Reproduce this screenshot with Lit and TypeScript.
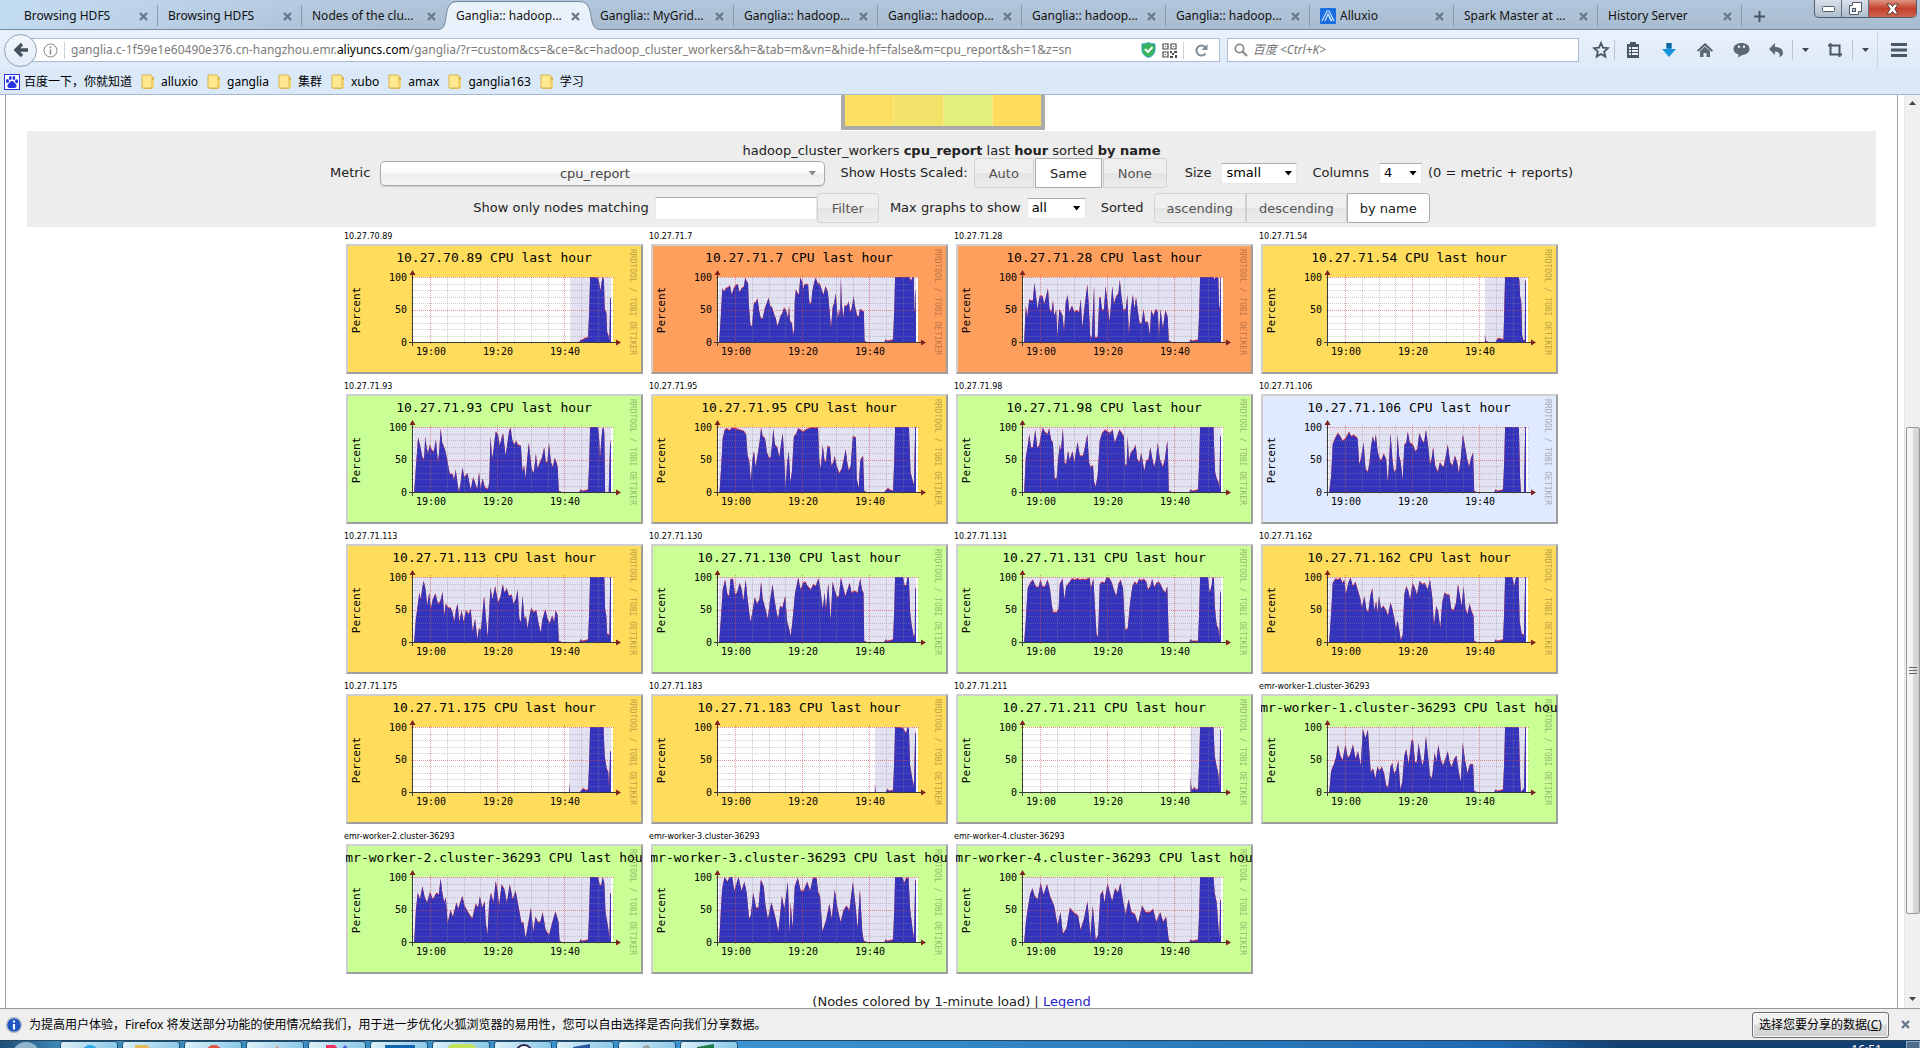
import { LitElement, html, svg, css } from "lit";
import { customElement, property } from "lit/decorators.js";
import { classMap } from "lit/directives/class-map.js";

interface Host {
  name: string;
  tone: "yellow" | "orange" | "green" | "blue";
  first?: number;
  span?: number;
  trace?: string;
  recent: string;
  idleFrom?: number;
}

const PLOT = { x: 67, y: 33, w: 200, h: 65 };
const RECENT_SPAN = 506;

const BUMP = "371:1 376:0 421:0 424:3 428:1 438:2 443:3 446:50 448:100 ";

const HOSTS: Host[] = [
  {
    name: "10.27.70.89", tone: "yellow", idleFrom: 398,
    recent: "420:0 424:2 430:3 434:5 443:6 446:50 448:100 468:98 471:90 474:78 477:90 480:100 483:95 485:50 489:45 491:15 495:8 497:0 499:67 501:67",
  },
  {
    name: "10.27.71.7", tone: "orange", first: 955,
    trace: "958:0 962:38 966:82 970:77 975:82 980:83 985:86 990:72 995:82 1000:87 1005:88 1009:76 1015:82 1020:84 1024:98 1028:92 1031:90 1033:58 1037:25 1041:24 1046:60 1050:60 1055:66 1059:48 1063:36 1068:35 1073:50 1079:60 1083:67 1087:55 1092:52 1097:42 1101:36 1105:24 1109:30 1113:40 1117:42 1122:52 1127:48 1132:36 1135:55 1137:32 1142:28 1145:10 1148:20 1149:62 1152:80 1156:75 1160:72 1163:98 1168:92 1171:80 1173:88 1183:88 1185:68 1187:58 1191:60 1193:75 1197:88 1202:98 1207:90 1213:88 1218:78 1222:72 1227:85 1233:76 1237:48 1241:20 1245:52 1249:60 1253:74 1258:35 1262:50 1264:35 1266:100 1268:60 1272:36 1275:55 1281:55 1286:62 1289:45 1293:50 1298:70 1302:52 1307:40 1311:38 1314:50 1319:48 1324:46 1326:0",
    recent: BUMP + "484:100 488:93 492:100 495:100 497:50 499:45 500:78 501:78",
  },
  {
    name: "10.27.71.28", tone: "orange", first: 184,
    trace: "187:0 191:55 195:38 200:65 204:63 209:63 213:90 217:70 221:50 226:70 233:70 238:58 242:68 247:82 251:50 256:45 260:63 263:40 268:48 271:8 276:50 284:40 288:15 292:60 297:72 301:45 308:55 314:45 320:48 326:45 330:65 334:22 340:55 347:88 350:60 354:8 358:6 361:50 364:85 366:6 373:6 377:68 380:68 384:48 389:50 393:85 398:58 403:30 407:60 410:85 414:58 420:70 425:73 429:95 433:70 438:48 444:50 448:72 452:10 457:50 462:72 466:50 470:68 474:50 479:28 484:28 489:50 493:30 500:30 505:10 508:48 514:40 520:50 525:45 528:8 532:50 538:20 544:48 550:38 553:0",
    recent: BUMP + "482:100 484:95 487:100 494:98 496:55 498:50 500:100 501:100",
  },
  {
    name: "10.27.71.54", tone: "yellow", idleFrom: 397,
    recent: "397:12 399:1 406:0 424:0 428:4 433:5 440:4 444:3 446:50 448:100 482:100 484:95 486:70 489:60 491:10 494:2 498:2 499:94 501:94",
  },
  {
    name: "10.27.71.93", tone: "green", first: 184,
    trace: "187:0 191:35 197:83 203:68 208:52 212:50 215:85 218:70 222:58 226:72 232:63 237:62 242:80 247:45 250:60 254:97 258:75 263:68 267:60 273:40 277:27 284:27 288:18 292:34 296:15 300:0 304:10 309:37 314:22 322:28 330:3 336:22 340:15 347:3 351:30 355:5 360:20 366:6 374:4 377:15 380:85 384:50 388:65 393:92 399:88 403:70 408:82 412:90 418:55 423:75 427:92 431:98 435:80 440:72 445:78 449:72 457:70 461:30 465:40 469:20 473:50 477:75 483:40 487:30 490:30 495:58 499:35 505:45 510:52 516:68 520:45 524:45 528:75 533:45 538:38 543:52 550:38 553:0",
    recent: BUMP + "468:100 471:80 473:48 476:75 479:95 482:100 484:90 486:0 495:0 499:80 501:70",
  },
  {
    name: "10.27.71.95", tone: "yellow", first: 955,
    trace: "959:0 963:38 967:82 972:95 978:97 984:94 990:98 1000:97 1010:95 1020:93 1026:88 1030:55 1034:48 1038:15 1042:50 1046:62 1050:38 1055:55 1060:75 1064:98 1068:85 1074:82 1079:60 1084:52 1088:52 1092:75 1095:97 1099:72 1105:68 1110:52 1115:75 1119:90 1123:45 1126:6 1130:45 1134:62 1138:14 1142:30 1147:85 1152:88 1158:97 1164:95 1170:92 1176:95 1184:97 1192:99 1200:98 1208:98 1211:50 1215:35 1220:72 1224:50 1228:45 1232:70 1238:68 1242:40 1247:45 1250:55 1255:40 1262:28 1268:35 1274:52 1278:65 1282:45 1286:32 1291:40 1296:85 1304:83 1306:20 1311:5 1315:48 1322:55 1325:0",
    recent: "371:1 376:0 421:0 426:3 430:5 434:3 443:1 446:50 448:100 483:100 485:65 487:30 491:20 496:10 499:100 501:100",
  },
  {
    name: "10.27.71.98", tone: "green", first: 184,
    trace: "187:0 191:52 196:70 200:88 204:68 209:68 215:95 220:68 225:70 230:88 234:98 239:92 246:88 250:97 255:80 260:75 264:20 269:20 273:50 277:72 280:62 285:97 289:45 293:42 298:63 302:48 309:62 314:45 322:76 328:55 336:55 341:70 347:88 351:45 355:38 361:40 364:15 368:8 373:25 378:78 384:90 392:95 398:92 404:90 411:95 416:75 422:85 428:95 434:90 439:85 442:42 446:40 449:85 452:48 457:60 464:65 469:72 473:50 479:45 483:60 487:45 491:32 496:48 501:48 506:68 512:48 516:38 520:48 525:75 530:50 538:38 543:50 549:78 551:50 553:0",
    recent: BUMP + "482:100 484:60 486:30 490:20 494:15 497:5 499:85 501:85",
  },
  {
    name: "10.27.71.106", tone: "blue", first: 955,
    trace: "958:0 963:25 967:73 973:82 980:90 986:85 992:78 1000:82 1008:92 1014:85 1020:87 1030:82 1034:42 1038:50 1045:75 1050:35 1056:30 1060:45 1064:70 1068:85 1073:75 1076:88 1081:60 1086:50 1090:48 1096:58 1102:50 1106:14 1109:40 1113:90 1118:50 1122:30 1128:35 1131:88 1135:55 1139:45 1144:18 1148:72 1153:75 1157:92 1162:75 1170:72 1176:62 1181:65 1186:90 1192:80 1198:75 1203:95 1208:72 1213:42 1217:50 1221:68 1226:40 1233:30 1238:45 1243:40 1248:38 1253:55 1258:72 1264:45 1270:40 1276:55 1282:45 1286:28 1291:50 1296:88 1302:68 1307:50 1312:38 1317:52 1322:60 1325:0",
    recent: BUMP + "483:100 486:20 488:0 496:0 499:100 501:100",
  },
  {
    name: "10.27.71.113", tone: "yellow", first: 184,
    trace: "187:0 191:34 196:55 200:75 204:65 208:85 211:93 216:80 220:55 225:75 229:50 234:65 241:74 247:58 253:62 259:76 263:40 267:58 273:52 279:52 284:45 288:30 293:50 297:58 301:30 307:48 312:30 318:48 325:42 330:50 335:15 341:35 347:3 351:20 356:18 360:45 364:70 368:40 373:6 376:40 380:83 385:65 392:85 399:60 405:68 411:88 416:75 421:82 427:70 434:72 438:58 444:65 449:80 453:35 457:30 461:70 466:35 470:38 474:20 479:40 483:52 489:45 496:48 501:30 507:14 512:35 519:50 524:35 530:28 536:40 541:30 545:48 550:40 553:0",
    recent: BUMP + "484:100 486:50 489:40 491:12 497:10 499:100 501:100",
  },
  {
    name: "10.27.71.130", tone: "green", first: 955,
    trace: "958:0 963:42 967:80 973:95 979:72 983:70 987:96 993:96 998:72 1003:75 1010:90 1015:80 1019:62 1025:95 1030:65 1037:30 1042:45 1048:68 1054:58 1060:65 1064:92 1068:65 1073:55 1081:35 1086:60 1093:88 1098:65 1103:45 1107:35 1112:55 1118:52 1125:70 1130:30 1135:20 1139:8 1144:35 1150:75 1158:98 1164:80 1170:90 1176:92 1182:85 1190:80 1196:88 1202:85 1209:97 1214:80 1220:50 1225:75 1228:48 1234:90 1240:32 1245:92 1250:80 1256:68 1261:70 1266:98 1271:85 1277:70 1282:78 1288:90 1293:75 1300:78 1308:75 1315:97 1319:80 1323:75 1325:0",
    recent: BUMP + "468:100 472:86 476:86 480:100 483:98 486:45 490:25 495:8 498:10 499:82 501:82",
  },
  {
    name: "10.27.71.131", tone: "green", first: 184,
    trace: "187:0 191:32 196:82 202:90 209:95 216:85 223:83 228:95 234:84 240:85 246:95 252:82 256:60 260:45 269:45 274:50 277:88 284:97 289:65 293:85 300:90 308:97 316:95 322:97 328:95 336:96 342:95 348:97 352:98 356:82 362:97 366:55 370:12 374:6 378:88 384:92 390:90 396:100 403:97 409:90 415:78 420:70 425:88 431:95 437:82 440:45 443:18 449:20 455:60 461:86 467:92 472:88 478:96 484:94 490:96 496:92 500:80 506:85 511:96 516:84 522:90 527:92 532:88 538:80 544:75 549:85 551:40 553:0",
    recent: "371:0 421:0 424:3 428:1 443:1 446:50 448:100 468:100 472:75 477:85 480:100 483:98 485:55 490:25 494:20 497:5 499:76 501:76",
  },
  {
    name: "10.27.71.162", tone: "yellow", first: 955,
    trace: "958:0 963:45 967:90 974:97 980:95 986:98 992:90 996:95 1000:72 1006:90 1012:98 1018:85 1024:92 1030:80 1036:68 1041:52 1047:70 1052:50 1057:45 1062:70 1067:82 1072:48 1077:62 1080:45 1084:70 1089:50 1095:55 1100:50 1107:40 1113:60 1118:50 1122:38 1127:20 1131:32 1135:20 1139:2 1144:10 1148:72 1153:85 1158:78 1163:65 1169:90 1175:82 1180:72 1187:93 1193:88 1200:90 1207:80 1213:95 1219:68 1223:25 1229:55 1234:45 1239:20 1244:60 1250:75 1256:72 1262:72 1267:50 1273:48 1279:60 1284:88 1290:65 1293:55 1298:85 1303:50 1308:42 1313:58 1319:45 1323:40 1325:0",
    recent: BUMP + "466:100 471:85 476:100 482:100 485:30 490:12 496:10 499:100 501:100",
  },
  {
    name: "10.27.71.175", tone: "yellow", idleFrom: 395,
    recent: "395:14 397:0 422:0 428:3 432:5 436:2 443:3 446:50 448:100 482:100 485:55 490:35 494:30 496:5 499:62 501:62",
  },
  {
    name: "10.27.71.183", tone: "yellow", idleFrom: 397,
    recent: "397:12 399:0 424:0 429:4 433:1 443:2 446:50 448:100 468:98 473:92 476:90 480:100 483:96 486:40 492:18 496:8 499:90 501:90",
  },
  {
    name: "10.27.71.211", tone: "green", idleFrom: 424,
    recent: "424:24 425:12 427:3 431:4 434:7 437:3 443:4 446:50 448:100 482:100 485:55 490:38 494:28 497:5 499:95 501:95",
  },
  {
    name: "emr-worker-1.cluster-36293", tone: "green", first: 955,
    trace: "958:0 963:32 970:42 975:52 980:72 986:55 992:48 999:72 1005:52 1010:55 1018:72 1025:50 1031:62 1038:40 1043:96 1050:82 1056:95 1060:58 1063:30 1069:35 1075:20 1080:38 1085:32 1091:38 1097:28 1102:10 1107:6 1113:38 1118:44 1122:28 1127:32 1133:48 1138:3 1143:15 1148:55 1153:65 1159:42 1166:78 1170:80 1175:45 1180:45 1184:75 1189:55 1194:40 1198:50 1203:85 1208:55 1213:25 1218:20 1225:60 1229:45 1234:72 1240:50 1246:40 1252:50 1258:62 1263:45 1268:38 1274:50 1280:55 1286:30 1291:15 1296:75 1301:50 1308:28 1314:42 1322:42 1325:0",
    recent: BUMP + "483:100 486:20 488:0 496:5 499:99 501:99",
  },
  {
    name: "emr-worker-2.cluster-36293", tone: "green", first: 124, span: 341,
    trace: "126:0 129:48 132:75 136:65 140:85 144:68 148:60 153:76 158:65 164:75 168:72 171:97 174:75 177:60 180:68 183:28 188:48 192:38 198:60 201:50 208:70 212:55 218:45 225:35 231:58 235:52 238:70 242:52 246:62 248:30 251:10 254:60 257:75 261:60 265:93 268:78 271:55 275:88 280:80 284:60 289:88 294:65 299:78 303:58 309:28 312:30 316:5 321:30 325:52 329:15 333:38 337:30 341:30 345:45 350:18 356:10 361:28 367:46 372:30 374:0",
    recent: BUMP + "468:100 472:88 476:86 480:100 484:90 487:45 493:24 497:5 499:74 501:74",
  },
  {
    name: "emr-worker-3.cluster-36293", tone: "green", first: 644, span: 341,
    trace: "646:0 649:48 651:80 655:100 660:92 664:100 668:100 672:78 679:100 684:78 689:92 693:75 697:35 700:40 704:75 709:52 713:52 717:95 722:85 725:55 729:35 735:60 741:40 747:15 753:70 757:50 763:92 766:10 768:60 771:20 775:85 780:98 785:78 790:78 796:92 801:78 806:98 812:98 815:75 818:70 822:15 828:32 834:58 838:35 843:80 848:50 853:30 858:48 863:55 868:48 874:92 878:60 882:20 886:80 890:15 893:0",
    recent: BUMP + "466:100 471:90 476:98 482:98 486:50 492:20 496:5 499:94 501:94",
  },
  {
    name: "emr-worker-4.cluster-36293", tone: "green", first: 1164, span: 341,
    trace: "1166:0 1169:30 1172:50 1176:72 1180:82 1184:70 1189:65 1194:90 1199:72 1205:88 1210:70 1217:55 1223:25 1228:45 1232:12 1238:20 1244:52 1250:45 1258:40 1262:18 1268:35 1274:62 1279:8 1283:55 1288:2 1292:10 1296:72 1300:78 1303:60 1308:90 1312:75 1316:62 1321:82 1326:75 1330:90 1335:60 1339:42 1344:65 1349:45 1355:42 1360:28 1367:55 1373:45 1380:45 1386:50 1391:30 1398:45 1403:30 1408:38 1412:5 1414:0",
    recent: BUMP + "482:100 485:75 490:60 494:25 497:5 499:64 501:64",
  },
];

function samples(host: Host): [number, number][] {
  const read = (text: string, first: number, span: number) =>
    text.trim().split(/\s+/).map((pair): [number, number] => {
      const [at, value] = pair.split(":").map(Number);
      return [PLOT.x + ((at - first) * PLOT.w) / span, value];
    });
  return [
    ...(host.trace ? read(host.trace, host.first ?? 0, host.span ?? RECENT_SPAN) : []),
    ...read(host.recent, 0, RECENT_SPAN),
  ];
}

function area(points: [number, number][], extra: number): string {
  const base = PLOT.y + PLOT.h;
  const line = points.map(([x, v]) => {
    const value = v > 0 ? Math.min(100, v + extra) : 0;
    return `L${x.toFixed(1)} ${(base - (value * PLOT.h) / 100).toFixed(1)}`;
  });
  return `M${points[0][0].toFixed(1)} ${base}${line.join("")}V${base}Z`;
}

@customElement("cpu-graph")
class CpuGraph extends LitElement {
  @property({ attribute: false }) host!: Host;

  static styles = css`
    :host { display: block; }
    .graph {
      display: block; width: 297px; height: 130px; overflow: hidden;
      font-family: "DejaVu Sans Mono", monospace; font-size: 10px;
    }
    .yellow { fill: #ffdc5c; }
    .orange { fill: #ff9f5e; }
    .green { fill: #c9ff94; }
    .blue { fill: #e0eaff; }
    .light { fill: #cfcfcf; }
    .dark { fill: #9e9e9e; }
    .title { font-size: 13px; }
    .unit { font-size: 11px; }
    .mark { font-size: 8px; opacity: 0.28; }
    .minor { stroke: #8c8c8c; stroke-opacity: 0.42; stroke-dasharray: 1 1; }
    .major { stroke: #dd4a4a; stroke-opacity: 0.6; stroke-dasharray: 1 1; }
    .axis { stroke: #3a3a3a; }
    .arrow { fill: #802020; }
  `;

  render() {
    const points = samples(this.host);
    const { x, y, w, h } = PLOT;
    const idle = this.host.idleFrom ?? 2;
    const idleX = x + (idle * w) / RECENT_SPAN;
    const rows = Array.from({ length: 11 }, (_, i) => i);
    const cols = Array.from({ length: 11 }, (_, i) => i);
    return html`<svg class="graph" viewBox="0 0 297 130" role="img" aria-label=${this.host.name + " CPU last hour"}>
      <rect class="dark" width="297" height="130"></rect>
      <path class="light" d="M0 0H297L295 2H2V128L0 130Z"></path>
      <rect class=${this.host.tone} x="2" y="2" width="293" height="126"></rect>
      <rect x=${x} y=${y} width=${w} height=${h} fill="#fff"></rect>
      <rect x=${idleX} y=${y} width=${x + 198 - idleX} height=${h} fill="#e2e2f2"></rect>
      <path d=${area(points, 1.5)} fill="#e01010" fill-opacity=".8"></path>
      <path d=${area(points, 0)} fill="#3333bb"></path>
      <g shape-rendering="crispEdges">
        ${rows.map((i) => svg`<line class=${i % 5 === 0 ? "major" : "minor"} x1=${x - 2} x2=${x + w + 2}
          y1=${Math.round(y + h - i * 6.5) + 0.5} y2=${Math.round(y + h - i * 6.5) + 0.5}></line>`)}
        ${cols.map((i) => svg`<line class=${i % 4 === 0 ? "major" : "minor"} y1=${y - 2} y2=${y + h + 2}
          x1=${Math.round(84 + i * 16.8) + 0.5} x2=${Math.round(84 + i * 16.8) + 0.5}></line>`)}
        <path class="axis" fill="none" d="M${x - 4} 98.5H272M${x - 0.5} 102V29"></path>
      </g>
      <path class="arrow" d="M63.5 31L66.5 26L69.5 31ZM270 95.5L275 98.5L270 101.5Z"></path>
      <text class="title" x="148" y="18" text-anchor="middle">${this.host.name} CPU last hour</text>
      <text x="61" y="37" text-anchor="end">100</text>
      <text x="61" y="69" text-anchor="end">50</text>
      <text x="61" y="102" text-anchor="end">0</text>
      <text x="85" y="111" text-anchor="middle">19:00</text>
      <text x="152" y="111" text-anchor="middle">19:20</text>
      <text x="219" y="111" text-anchor="middle">19:40</text>
      <text class="unit" transform="translate(14 66) rotate(-90)" text-anchor="middle">Percent</text>
      <text class="mark" transform="translate(284 5) rotate(90)">RRDTOOL / TOBI OETIKER</text>
    </svg>`;
  }
}

const TABS = [
  "Browsing HDFS", "Browsing HDFS", "Nodes of the clu...", "Ganglia:: hadoop...", "Ganglia:: MyGrid...",
  "Ganglia:: hadoop...", "Ganglia:: hadoop...", "Ganglia:: hadoop...", "Ganglia:: hadoop...",
  "Alluxio", "Spark Master at ...", "History Server",
];
const ACTIVE_TAB = 3;
const BOOKMARKS = ["alluxio", "ganglia", "集群", "xubo", "amax", "ganglia163", "学习"];

const cross = html`<svg width="9" height="9" viewBox="0 0 9 9"><path d="M1 1L8 8M8 1L1 8" stroke="#67798c" stroke-width="2.4"></path></svg>`;
const folder = html`<svg width="14" height="16" viewBox="0 0 14 16"><path d="M3 3h10v10l-2 2H3z" fill="#d9b64f"></path><path d="M1 1h9l1 1v12H1z" fill="#ffe88f" stroke="#d8b54e"></path><path d="M11 6h2v7l-2 1z" fill="#f2d36b"></path></svg>`;
const caret = html`<svg width="7" height="4" viewBox="0 0 7 4"><path d="M0 0h7L3.500 4z" fill="#3d4852"></path></svg>`;

const ICONS = {
  star: html`<svg width="18" height="18" viewBox="0 0 18 18"><path d="M9 2l2 4.700 5 .5-3.800 3.400 1.100 5L9 13l-4.300 2.600 1.100-5L2 7.200l5-.5z" fill="none" stroke="#4a5763" stroke-width="1.800"></path></svg>`,
  list: html`<svg width="16" height="16" viewBox="0 0 16 16"><path d="M5 2V0h6v2h3v14H2V2z" fill="#4a5763"></path><path d="M4 5h2v2H4zM7 5h6v2H7zM4 8h2v2H4zM7 8h6v2H7zM4 11h2v2H4zM7 11h6v2H7z" fill="#e7f0f9"></path></svg>`,
  down: html`<svg width="16" height="16" viewBox="0 0 16 16"><path d="M5.500 1h5v6H15l-7 8-7-8h4.500z" fill="#1b93dc"></path><path d="M5.500 1h5v5h-5z" fill="#1265a0"></path></svg>`,
  home: html`<svg width="16" height="16" viewBox="0 0 16 16"><path d="M0 8.500L8 1l8 7.500-1.200 1.200L8 3.500 1.200 9.700z" fill="#4a5763"></path><path d="M3 9l5-4.500L13 9v6H9.500v-4h-3v4H3z" fill="#5c6975"></path></svg>`,
  chat: html`<svg width="17" height="16" viewBox="0 0 17 16"><path d="M8.500 1c4.500 0 8 2.500 8 6 0 3.300-3 5.600-7 5.900L5 15.500l.6-3C2.700 11.700.5 9.700.5 7c0-3.500 3.500-6 8-6z" fill="#5c6975"></path><circle cx="6" cy="4.800" r="1.200" fill="#e7f0f9"></circle><circle cx="11" cy="4.800" r="1.200" fill="#e7f0f9"></circle></svg>`,
  undo: html`<svg width="16" height="16" viewBox="0 0 16 16"><path d="M7 1v4c5 0 8 2.500 8 6 0 2-1.500 3.500-4 4 2-2.500 0-5.500-4-5.500V13L1 7z" fill="#5c6975"></path></svg>`,
  crop: html`<svg width="16" height="16" viewBox="0 0 16 16"><path d="M3.500 1v11.500H15M1 3.500h11.500V15" fill="none" stroke="#4a5763" stroke-width="2"></path></svg>`,
  menu: html`<svg width="16" height="14" viewBox="0 0 16 14"><path d="M0 0h16v3H0zM0 5.500h16v3H0zM0 11h16v3H0z" fill="#4a5763"></path></svg>`,
};

const TASKS = [
  svg`<circle cx="29" cy="11" r="8" fill="#2ba9e6"></circle>`,
  svg`<path d="M12 3h12l3 3h6v4H12z" fill="#e3b95c"></path>`,
  svg`<circle cx="29" cy="11" r="8" fill="#e0503c"></circle>`,
  svg`<path d="M24 10l6-6 6 6z" fill="#e58f7e"></path>`,
  svg`<path d="M17 3h9l5 7H17z" fill="#ef2f60"></path><path d="M30 10l6-7 6 7z" fill="#4c5fd0"></path>`,
  svg`<path d="M14 3h30v7H14z" fill="#0f66b0"></path>`,
  svg`<path d="M14 10q0-8 8-8h14q8 0 8 8z" fill="#c3e35a"></path>`,
  svg`<circle cx="29" cy="11" r="8" fill="#fff" stroke="#2b2550" stroke-width="2"></circle>`,
  svg`<path d="M16 5l17-3v8H16z" fill="#2a579f"></path>`,
  svg`<path d="M24 4l5-1 6 7H24z" fill="#9aa6a0"></path>`,
  svg`<path d="M16 5l17-3v8H16z" fill="#1d7a46"></path>`,
];

@customElement("app-root")
class AppRoot extends LitElement {
  static styles = css`
    :host { display: block; }
    * { box-sizing: border-box; }
    button, select, input { font: inherit; color: inherit; margin: 0; }
    button { padding: 0; border: 0; background: none; }
    svg { display: block; flex: none; }
    .window {
      display: flex; flex-direction: column; height: 100vh; overflow: hidden; background: #fff;
      font: 12px/16px "Noto Sans", "Noto Sans CJK SC", sans-serif; color: #111;
    }
    .tabs {
      display: flex; flex: none; height: 30px; padding: 0 3px 0 14px; align-items: stretch;
      background: linear-gradient(90deg, #c3dbf1 0, transparent 400px), linear-gradient(#b2c7dc, #a9bbcf);
      border-bottom: 1px solid #75899e;
    }
    .tab {
      position: relative; display: flex; flex: 0 1 144px; min-width: 0; align-items: center; gap: 4px;
      padding: 3px 10px 0 10px;
    }
    .tab::after { content: ""; position: absolute; right: 0; top: 5px; height: 21px; border-right: 1px solid #8899ab; }
    .tab.active::after, .tab.before::after { display: none; }
    .shape { position: absolute; left: -8px; top: 1px; }
    .tab-name { position: relative; flex: 1; text-align: left; white-space: nowrap; overflow: hidden; height: 18px; }
    .tab-close { position: relative; }
    .new-tab { width: 34px; display: grid; place-items: center; padding-top: 3px; }
    .controls {
      display: flex; margin-left: auto; height: 18px; border: 1px solid #4f5d6e; border-top: 0;
      border-radius: 0 0 5px 5px; overflow: hidden; background: linear-gradient(#d9e1ea, #aebccb);
    }
    .control { display: grid; place-items: center; width: 27px; border-right: 1px solid #5c6a7a; }
    .control.close { width: 47px; border: 0; background: linear-gradient(#dd9484, #c4402b 50%, #d0644f); }
    .nav {
      display: flex; flex: none; align-items: center; height: 40px; padding-left: 4px;
      background: linear-gradient(#e8f1fb, #deeaf8);
    }
    .back {
      position: relative; z-index: 1; display: grid; place-items: center; width: 33px; height: 33px; flex: none;
      border: 1px solid #8fa1b4; border-radius: 50%; background: linear-gradient(#f2f7fc, #e2ecf7);
    }
    .field {
      display: flex; align-items: center; height: 24px; background: #fff; border: 1px solid #aabccf; min-width: 0;
    }
    .url { flex: 1196 1 0; margin-left: -7px; padding: 0 10px 0 12px; gap: 6px; }
    .url svg + .rule + svg { margin-left: 4px; }
    .search { flex: 347 1 0; margin-left: 7px; padding: 0 6px; gap: 5px; }
    .rule { width: 1px; height: 17px; background: #c9d3dd; flex: none; }
    .address { flex: 1; overflow: hidden; white-space: nowrap; color: #7b7b7b; height: 18px; line-height: 18px; }
    .address strong { font-weight: 400; color: #000; }
    .search-input { flex: 1; min-width: 0; border: 0; outline: 0; padding: 0; background: none; }
    .search-input::placeholder { color: #757575; font-style: italic; opacity: 1; }
    .tools { display: flex; flex: none; align-items: center; padding-left: 8px; }
    .tool { display: grid; place-items: center; width: 36px; height: 20px; }
    .tool.ruled { border-right: 1px solid #b8c4d0; }
    .tool.star { width: 28px; }
    .tool.undo { width: 34px; }
    .tool.small { width: 24px; }
    .tool.menu { width: 43px; height: 38px; border-left: 1px solid #c9d6e3; }
    .bookmarks {
      display: flex; flex: none; align-items: center; gap: 9px; height: 25px; padding: 0 4px;
      background: #dae8f7; border-bottom: 1px solid #a3b8ce;
    }
    .bookmark { display: flex; align-items: center; gap: 6px; color: #000; text-decoration: none; white-space: nowrap; }
    .bookmark.first { gap: 4px; }
    .viewport { display: flex; flex: 1; min-height: 0; }
    .page {
      flex: 1; min-width: 0; overflow: hidden; margin: 0 6px 0 5px; padding: 0 21px;
      border: solid #a0a0a0; border-width: 0 1px;
      font: 13px/16px "DejaVu Sans", Verdana, sans-serif; color: #222;
    }
    .map-row { display: flex; justify-content: center; padding: 0 17px 1px 0; }
    .map { display: flex; gap: 1px; width: 204px; height: 35px; border: 4px solid #aaa; border-top: 0; background: #f8ea86; }
    .cell { flex: 1; background: #fbe061; }
    .cell.b { background: #f3e36b; }
    .cell.c { background: #e1ef7b; }
    .cell.d { background: #ffdc5e; }
    .panel { background: #ededed; padding: 12px 0 4px; }
    .caption { margin: 0; text-align: center; line-height: 15px; }
    .row { display: flex; align-items: center; justify-content: center; height: 30px; white-space: nowrap; }
    .row + .row { margin-top: 5px; }
    .row label { margin-right: 10px; }
    .pick { position: relative; display: flex; margin-right: 15px; }
    .pick::after {
      content: ""; position: absolute; right: 5px; top: 8px; width: 8px; height: 5px; background: #000;
      clip-path: polygon(0 0, 100% 0, 50% 100%); pointer-events: none;
    }
    .pick select {
      appearance: none; height: 21px; padding: 0 20px 0 4px; border: 1px solid #e3e9ef; border-top-color: #abadb3;
      border-radius: 0; background: #fff; color: #000;
    }
    .pick.last { margin-right: 6px; }
    .pick .size { width: 76px; }
    .pick .columns { width: 43px; }
    .pick .max { width: 59px; }
    .pick.metric::after { right: 9px; top: 10px; background: #888; }
    .pick.metric select {
      width: 445px; height: 25px; border: 1px solid #aaa; border-radius: 5px; color: #444; text-align: center;
      text-align-last: center; padding: 2px 20px 0 4px;
      background: linear-gradient(#fff 20%, #f6f6f6 50%, #eee 52%, #f4f4f4); box-shadow: 0 1px 1px #ccc;
    }
    .segments { display: flex; }
    .segment {
      position: relative; height: 30px; padding: 2px 12px 0; color: #555; border: 1px solid #d3d3d3;
      background: linear-gradient(#efefef 50%, #e4e4e4 51%, #ededed);
    }
    .segment + .segment { border-left-color: #ccc; }
    .segment:first-child { border-radius: 4px 0 0 4px; }
    .segment:last-child { border-radius: 0 4px 4px 0; }
    .segment:only-child { border-radius: 4px; margin-right: 11px; padding: 2px 14px 0; }
    .segment.on { background: #fff; color: #212121; border: 1px solid #aaa; }
    .scaling { margin-right: 18px; gap: 1px; }
    .scaling .segment { padding: 2px 14px 0; }
    .match { width: 162px; height: 23px; border: 1px solid #e3e9ef; border-top-color: #abadb3; background: #fff; }
    .row label.tight { margin-right: 6px; }
    .hosts {
      display: grid; grid-template-columns: repeat(4, 305px); justify-content: center; padding-left: 5px; color: #000;
    }
    .host-cell { height: 150px; padding: 3px 0 0; }
    .host-name { display: block; font-size: 8px; line-height: 14px; color: #000; text-decoration: none; white-space: nowrap; }
    .host-cell cpu-graph { margin-left: 2px; }
    .legend { margin: 0; padding-top: 17px; text-align: center; }
    .legend a { color: #2222cc; text-decoration: none; }
    .scrollbar {
      display: flex; flex-direction: column; align-items: center; justify-content: space-between; width: 16px;
      padding: 6px 0 7px; background: #f0f0f0; border-left: 1px solid #e6e6e6; position: relative;
    }
    .thumb {
      position: absolute; top: 36.400%; bottom: 10.300%; left: 1px; right: 0; border: 1px solid #989898; border-radius: 2px;
      background: linear-gradient(90deg, #f5f5f5 45%, #dcdcde 50%, #d0d0d3); display: grid; place-items: center;
    }
    .notice {
      display: flex; flex: none; align-items: center; height: 32px; padding: 0 10px 0 6px; gap: 7px;
      background: #efefef; border-top: 1px solid #999; color: #000;
    }
    .notice-text { flex: 1; white-space: nowrap; margin: 0; }
    .share {
      width: 137px; height: 26px; border: 1px solid #707070; border-radius: 3px; box-shadow: inset 0 0 0 1px #fafafa;
      background: linear-gradient(#f2f2f2 45%, #dddddd 50%, #cfcfcf); white-space: nowrap;
    }
    .dismiss { margin-left: 5px; }
    .taskbar {
      display: flex; flex: none; height: 8px; overflow: hidden; padding-left: 12px; gap: 4px;
      border-top: 1px solid #24445f;
      background: linear-gradient(90deg, #1f4f78 0, #3d88b6 60px, #3a94d2 740px, #2069b0 1500px, #14406f 1620px, #14406f);
    }
    .orb { width: 28px; height: 28px; margin: 1px 16px 0 0; border-radius: 50%; background: #8fb3c9; flex: none; }
    .task { width: 58px; flex: none; border: 1px solid #1d5377; border-radius: 3px 3px 0 0; height: 20px; background: linear-gradient(120deg, #dff1f9, #7fc2e3); overflow: hidden; }
    .clock { margin-left: auto; padding-right: 20px; color: #fff; line-height: 18px; }
    .desktop { width: 14px; height: 20px; border: 1px solid #93a9be; background: #4d6c8c; flex: none; }
  `;

  private renderTab(name: string, index: number) {
    const active = index === ACTIVE_TAB;
    return html`<div class=${classMap({ tab: true, active, before: index === ACTIVE_TAB - 1 })}>
      ${active
        ? html`<svg class="shape" width="162" height="29" viewBox="0 0 162 29"><path d="M0 29C8 28 7 20 9 10Q11 1 19 1H142Q150 1 152 10C154 20 154 28 162 29Z" fill="#e9f2fb"></path><path d="M0 28.500C8 28 7 20 9 10Q11 .5 19 .5H142Q150 .5 152 10C154 20 154 28 162 28.500" fill="none" stroke="#75899e"></path></svg>`
        : null}
      ${name === "Alluxio"
        ? html`<svg width="16" height="16" viewBox="0 0 16 16"><rect width="16" height="16" rx="1" fill="#1a6fe0"></rect><path d="M2 13L7 3h2l5 10M5 13l3-7 3 7M8 6l4 7" fill="none" stroke="#cfe4ff" stroke-width="1.200"></path></svg>`
        : null}
      <button class="tab-name">${name}</button>
      <button class="tab-close" aria-label="Close tab">${cross}</button>
    </div>`;
  }

  render() {
    return html`<div class="window">
      <header class="tabs">
        ${TABS.map((name, i) => this.renderTab(name, i))}
        <button class="new-tab" aria-label="New tab"><svg width="11" height="11" viewBox="0 0 11 11"><path d="M5.500 0v11M0 5.500h11" stroke="#4a5763" stroke-width="2"></path></svg></button>
        <div class="controls">
          <button class="control" aria-label="Minimize"><svg width="13" height="6" viewBox="0 0 13 6"><rect x=".5" y=".5" width="12" height="5" rx="1" fill="#fff" stroke="#4e5866"></rect></svg></button>
          <button class="control" aria-label="Restore"><svg width="13" height="13" viewBox="0 0 13 13"><path d="M3.500.5h9v9h-3v3h-9v-9h3z" fill="#fff" stroke="#4e5866"></path><rect x="3.500" y="6.500" width="3" height="3" fill="#b9c5d2" stroke="#4e5866"></rect></svg></button>
          <button class="control close" aria-label="Close"><svg width="13" height="12" viewBox="0 0 13 12"><path d="M1 1h3.500l2 2.500 2-2.500H12L8.800 6 12 11H8.500l-2-2.500-2 2.500H1l3.200-5z" fill="#fff" stroke="#5a3a3a"></path></svg></button>
        </div>
      </header>
      <nav class="nav">
        <button class="back" aria-label="Back"><svg width="16" height="16" viewBox="0 0 16 16"><path d="M9 2L3 8l6 6M3.500 8H15" fill="none" stroke="#46525e" stroke-width="3.400"></path></svg></button>
        <div class="field url">
          <svg width="15" height="15" viewBox="0 0 15 15"><circle cx="7.500" cy="7.500" r="6.500" fill="none" stroke="#8b8b8b"></circle><path d="M7.500 6.500v5M7.500 3.500v1.700" stroke="#8b8b8b" stroke-width="1.500"></path></svg>
          <span class="rule"></span>
          <span class="address">ganglia.c-1f59e1e60490e376.cn-hangzhou.emr.<strong>aliyuncs.com</strong>/ganglia/?r=custom&amp;cs=&amp;ce=&amp;c=hadoop_cluster_workers&amp;h=&amp;tab=m&amp;vn=&amp;hide-hf=false&amp;m=cpu_report&amp;sh=1&amp;z=sn</span>
          <svg width="15" height="16" viewBox="0 0 15 16"><path d="M1 2q4 0 6.500-1.500Q10 2 14 2v6q0 5-6.500 7.500Q1 13 1 8z" fill="#35b45a" stroke="#2f9fc4"></path><path d="M4 7l3 3 4.500-5" fill="none" stroke="#fff" stroke-width="2"></path></svg>
          <svg width="15" height="15" viewBox="0 0 15 15"><path d="M1 1h5v5H1zM9 1h5v5H9zM1 9h5v5H1z" fill="none" stroke="#4b4b4b" stroke-width="1.200"></path><path d="M3 3h1v1H3zM11 3h1v1h-1zM3 11h1v1H3zM8 8h2v2H8zM12 8h3v2h-3zM10 10h2v2h-2zM13 12h2v3h-2zM8 13h3v2H8z" fill="#4b4b4b"></path></svg>
          <span class="rule"></span>
          <svg width="15" height="15" viewBox="0 0 15 15"><path d="M11.500 10.500A5 5 0 1 1 11 4" fill="none" stroke="#7f8c98" stroke-width="2"></path><path d="M13.500 1v6h-6z" fill="#7f8c98"></path></svg>
        </div>
        <div class="field search">
          <svg width="14" height="14" viewBox="0 0 14 14"><circle cx="5.500" cy="5.500" r="4.200" fill="none" stroke="#8b8b8b" stroke-width="1.800"></circle><path d="M8.500 8.500L13 13" stroke="#8b8b8b" stroke-width="2.200"></path></svg>
          <input class="search-input" aria-label="Search" placeholder="百度 &lt;Ctrl+K&gt;" />
        </div>
        <div class="tools">
          <button class="tool ruled star" aria-label="Bookmark this page">${ICONS.star}</button>
          <button class="tool" aria-label="Bookmarks">${ICONS.list}</button>
          <button class="tool" aria-label="Downloads">${ICONS.down}</button>
          <button class="tool" aria-label="Home">${ICONS.home}</button>
          <button class="tool" aria-label="Chat">${ICONS.chat}</button>
          <button class="tool ruled undo" aria-label="Undo">${ICONS.undo}</button>
          <button class="tool small" aria-label="Undo list">${caret}</button>
          <button class="tool ruled" aria-label="Capture">${ICONS.crop}</button>
          <button class="tool small" aria-label="Capture options">${caret}</button>
          <button class="tool menu" aria-label="Menu">${ICONS.menu}</button>
        </div>
      </nav>
      <div class="bookmarks">
        <a class="bookmark first" href="#"><svg width="16" height="16" viewBox="0 0 16 16"><rect x=".5" y=".5" width="15" height="15" fill="#fff" stroke="#2932e1"></rect><g fill="#2932e1"><ellipse cx="3.500" cy="7" rx="1.500" ry="2"></ellipse><ellipse cx="6.300" cy="4" rx="1.400" ry="2.100"></ellipse><ellipse cx="9.900" cy="4" rx="1.400" ry="2.100"></ellipse><ellipse cx="12.600" cy="7.200" rx="1.500" ry="2"></ellipse><path d="M8 7c2 0 2.500 2 4 3.300 1.300 1.300.6 3.700-1.500 3.700h-5C3.400 14 2.700 11.600 4 10.300 5.500 9 6 7 8 7z"></path></g></svg>百度一下，你就知道</a>
        ${BOOKMARKS.map((name) => html`<a class="bookmark" href="#">${folder}${name}</a>`)}
      </div>
      <div class="viewport">
        <main class="page">
          <div class="map-row"><div class="map"><span class="cell"></span><span class="cell b"></span><span class="cell c"></span><span class="cell d"></span></div></div>
          <form class="panel">
            <p class="caption">hadoop_cluster_workers <b>cpu_report</b> last <b>hour</b> sorted <b>by name</b></p>
            <div class="row">
              <label for="metric">Metric</label>
              <span class="pick metric"><select id="metric"><option>cpu_report</option></select></span>
              <label class="tight" for="scale-auto">Show Hosts Scaled:</label>
              <span class="segments scaling">
                <button type="button" id="scale-auto" class="segment">Auto</button>
                <button type="button" class="segment on">Same</button>
                <button type="button" class="segment">None</button>
              </span>
              <label for="size">Size</label>
              <span class="pick"><select id="size" class="size"><option>small</option></select></span>
              <label for="columns">Columns</label>
              <span class="pick last"><select id="columns" class="columns"><option>4</option></select></span>
              <span>(0 = metric + reports)</span>
            </div>
            <div class="row">
              <label class="tight" for="match">Show only nodes matching</label>
              <input id="match" class="match" />
              <span class="segments"><button type="button" class="segment">Filter</button></span>
              <label class="tight" for="max">Max graphs to show</label>
              <span class="pick"><select id="max" class="max"><option>all</option></select></span>
              <label for="sort-ascending">Sorted</label>
              <span class="segments">
                <button type="button" id="sort-ascending" class="segment">ascending</button>
                <button type="button" class="segment">descending</button>
                <button type="button" class="segment on">by name</button>
              </span>
            </div>
          </form>
          <section class="hosts">
            ${HOSTS.map((host) => html`<div class="host-cell"><a class="host-name" href="#">${host.name}</a><cpu-graph .host=${host}></cpu-graph></div>`)}
          </section>
          <p class="legend">(Nodes colored by 1-minute load) | <a href="#">Legend</a></p>
        </main>
        <div class="scrollbar">
          <svg width="7" height="4" viewBox="0 0 7 4"><path d="M0 4h7L3.500 0z" fill="#444"></path></svg>
          <div class="thumb"><svg width="8" height="8" viewBox="0 0 8 8"><path d="M0 .5h8M0 3.500h8M0 6.500h8" stroke="#666"></path></svg></div>
          <svg width="7" height="4" viewBox="0 0 7 4"><path d="M0 0h7L3.500 4z" fill="#444"></path></svg>
        </div>
      </div>
      <div class="notice">
        <svg width="16" height="16" viewBox="0 0 16 16"><circle cx="8" cy="8" r="7.300" fill="#1f55c4" stroke="#a9b4c4" stroke-width="1.400"></circle><path d="M8 7v5.500M8 3.500v2" stroke="#fff" stroke-width="2.200"></path></svg>
        <p class="notice-text">为提高用户体验，Firefox 将发送部分功能的使用情况给我们，用于进一步优化火狐浏览器的易用性，您可以自由选择是否向我们分享数据。</p>
        <button class="share">选择您要分享的数据(<u>C</u>)</button>
        <button class="dismiss" aria-label="Dismiss">${cross}</button>
      </div>
      <footer class="taskbar">
        <span class="orb"></span>
        ${TASKS.map((icon) => html`<span class="task"><svg width="58" height="10" viewBox="0 0 58 10">${icon}</svg></span>`)}
        <span class="clock">16:51</span>
        <span class="desktop"></span>
      </footer>
    </div>`;
  }
}
